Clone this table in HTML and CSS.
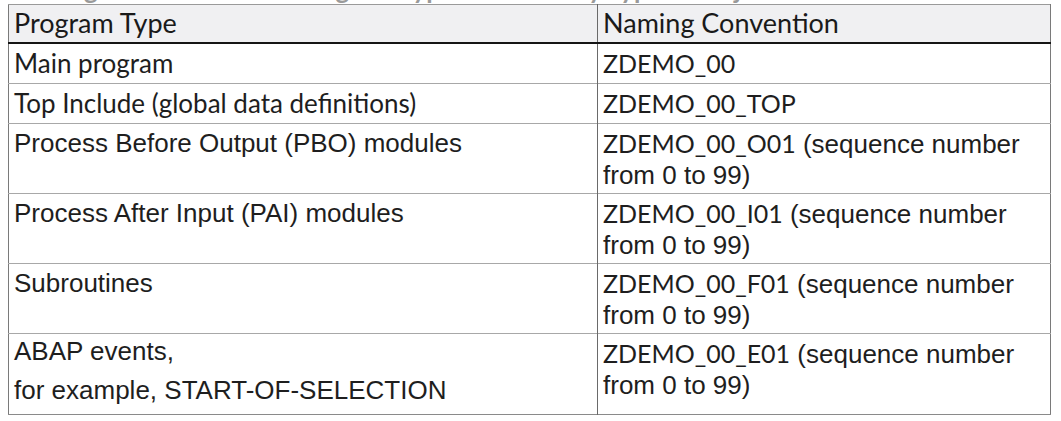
FILE: index.html
```html
<!DOCTYPE html>
<html>
<head>
<meta charset="utf-8">
<link rel="stylesheet" href="styles.css">
</head>
<body>
<div class="title-strip"><div class="title">Naming Conventions for Program Types in ABAP by Type of Object</div></div>
<table class="conv">
  <thead>
    <tr class="head">
      <th class="c1">Program Type</th>
      <th class="c2">Naming Convention</th>
    </tr>
  </thead>
  <tbody>
    <tr class="r1">
      <td class="lato">Main program</td>
      <td><span class="code">ZDEMO_00</span></td>
    </tr>
    <tr class="r2">
      <td class="lato">Top Include (global data definitions)</td>
      <td><span class="code">ZDEMO_00_TOP</span></td>
    </tr>
    <tr class="r3">
      <td>Process Before Output (PBO) modules</td>
      <td><span class="code">ZDEMO_00_O01</span> (sequence number from 0 to 99)</td>
    </tr>
    <tr class="r4">
      <td>Process After Input (PAI) modules</td>
      <td><span class="code">ZDEMO_00_I01</span> (sequence number from 0 to 99)</td>
    </tr>
    <tr class="r5">
      <td>Subroutines</td>
      <td><span class="code">ZDEMO_00_F01</span> (sequence number from 0 to 99)</td>
    </tr>
    <tr class="r6">
      <td class="events"><p class="para">ABAP events,</p><p class="para second">for example, START-OF-SELECTION</p></td>
      <td><span class="code">ZDEMO_00_E01</span> (sequence number from 0 to 99)</td>
    </tr>
  </tbody>
</table>
</body>
</html>
```

FILE: styles.css
```css
html, body {
  margin: 0;
  padding: 0;
  background: #ffffff;
}

body {
  font-family: "Liberation Sans", Arial, sans-serif;
  color: #1e1e1e;
}

.title-strip {
  height: 4px;
  overflow: hidden;
  position: relative;
}

.title {
  position: absolute;
  left: 8px;
  bottom: 2px;
  font-family: Lato, sans-serif;
  font-weight: 700;
  font-size: 26px;
  line-height: 26px;
  color: #9a9a9a;
  white-space: nowrap;
}

.conv {
  margin-left: 8px;
  width: 1043px;
  border-collapse: collapse;
  table-layout: fixed;
  border-left: 1px solid #7a7a7a;
  border-right: 1px solid #7a7a7a;
  border-top: 1px solid #9a9a9a;
  border-bottom: 1px solid #8a8a8a;
}

.conv th,
.conv td {
  vertical-align: top;
  text-align: left;
  padding: 4px 5px 2px 5px;
  font-size: 26px;
  line-height: 31px;
  font-weight: 400;
}

.conv th + th,
.conv td + td {
  border-left: 1px solid #6a6a6a;
}

.c1 {
  width: 578px;
}

.head th {
  background: #f0f0f2;
  font-family: Lato, sans-serif;
  font-size: 27px;
  height: 31px;
  padding-top: 2px;
  padding-bottom: 4px;
  border-bottom: 2px solid #151515;
  color: #1a1a1a;
}

.conv tbody tr + tr td {
  border-top: 1px solid #a8a8a8;
}

.lato {
  font-family: Lato, sans-serif;
  font-size: 26.5px;
}

.code {
  font-family: Lato, sans-serif;
  font-size: 25px;
}

.r1 td { height: 33px; }
.r2 td { height: 33px; }
.r3 td { height: 62px; }
.r4 td { height: 63px; }
.r5 td { height: 61px; }
.r6 td { height: 74px; }

.conv td.events {
  padding-top: 2px;
  padding-bottom: 4px;
}

.para {
  margin: 0;
}

.para.second {
  margin-top: 8px;
}
```
